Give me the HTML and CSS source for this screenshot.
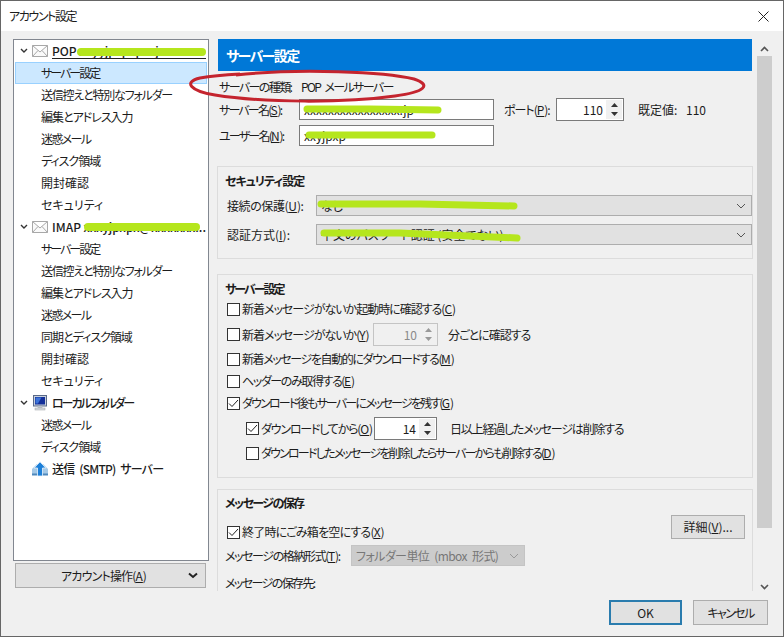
FILE: index.html
```html
<!DOCTYPE html>
<html lang="ja">
<head>
<meta charset="utf-8">
<title>アカウント設定</title>
<link rel="stylesheet" href="styles.css">
</head>
<body>
<div class="dialog">
  <div class="titlebar">
    <span class="t14">アカウント設定</span>
    <svg class="close" width="11" height="11" viewBox="0 0 11 11"><path d="M.5.500L10.500 10.500M10.500.500L.5 10.500" stroke="#222" fill="none"/></svg>
  </div>
  <div class="main">
    <div class="sidebar">
      <div class="tree">
        <div class="row account">
          <svg class="twisty" width="8" height="6" viewBox="0 0 8 6"><path d="M1 1l3 3 3-3" stroke="#333" stroke-width="1.4" fill="none"/></svg>
          <svg class="icon" width="16" height="12" viewBox="0 0 16 12"><path d="M.5.5h15v11H.5zM.5.5L8 7l7.5-6.5M.5 11.500L6 5.500M15.500 11.500L10 5.500" fill="#fafafa" stroke="#a8a8a8"/></svg>
          <span class="name underlined">POP xxyyjpxpxpxxjxxxxx</span>
        </div>
        <div class="row child selected"><span class="t20">サーバー設定</span></div>
        <div class="row child"><span class="t12">送信控えと特別なフォルダー</span></div>
        <div class="row child"><span class="t10">編集とアドレス入力</span></div>
        <div class="row child"><span class="t16">迷惑メール</span></div>
        <div class="row child"><span class="t10">ディスク領域</span></div>
        <div class="row child">開封確認</div>
        <div class="row child">セキュリティ</div>
        <div class="row account">
          <svg class="twisty" width="8" height="6" viewBox="0 0 8 6"><path d="M1 1l3 3 3-3" stroke="#333" stroke-width="1.4" fill="none"/></svg>
          <svg class="icon" width="16" height="12" viewBox="0 0 16 12"><path d="M.5.5h15v11H.5zM.5.5L8 7l7.5-6.5M.5 11.500L6 5.500M15.500 11.500L10 5.500" fill="#fafafa" stroke="#a8a8a8"/></svg>
          <span class="name">IMAP xxxyjpxpx@xxxxxxx...</span>
        </div>
        <div class="row child"><span class="t20">サーバー設定</span></div>
        <div class="row child"><span class="t12">送信控えと特別なフォルダー</span></div>
        <div class="row child"><span class="t10">編集とアドレス入力</span></div>
        <div class="row child"><span class="t16">迷惑メール</span></div>
        <div class="row child"><span class="t10">同期とディスク領域</span></div>
        <div class="row child">開封確認</div>
        <div class="row child">セキュリティ</div>
        <div class="row account">
          <svg class="twisty" width="8" height="6" viewBox="0 0 8 6"><path d="M1 1l3 3 3-3" stroke="#333" stroke-width="1.4" fill="none"/></svg>
          <svg class="icon" width="16" height="16" viewBox="0 0 16 16"><rect x="1.500" y=".5" width="13" height="10.500" fill="#c8d0dc" stroke="#5a6a88"/><rect x="3" y="2" width="10" height="7.500" fill="#14309a"/><path d="M3.500 2.500h6l-3.500 6h-2.500z" fill="#3d74d8"/><path d="M6 11h4l.5 2h-5z" fill="#b9c0c8"/><rect x="3" y="13" width="10" height="2" fill="#d6dade" stroke="#a0a4a8" stroke-width=".5"/></svg>
          <span class="name t20">ローカルフォルダー</span>
        </div>
        <div class="row child"><span class="t16">迷惑メール</span></div>
        <div class="row child"><span class="t10">ディスク領域</span></div>
        <div class="row account">
          <span class="twisty-space"></span>
          <svg class="icon" width="16" height="16" viewBox="0 0 16 16"><path d="M0 8l5-5h6l5 5v6H0z" fill="#a4c8e6"/><path d="M0 12.500h16v2H0z" fill="#4f88bc"/><path d="M8 .8l5.800 6.200H10.500v8h-5V7H2.200z" fill="#1d7fd8" stroke="#eaf4fc" stroke-width=".8"/></svg>
          <span class="name t8 spaced">送信 (SMTP) サーバー</span>
        </div>
      </div>
      <div class="action-btn">
        <span class="action-label t8">アカウント操作(<u>A</u>)</span>
        <svg class="action-arrow" width="10" height="7" viewBox="0 0 10 7"><path d="M1 1.500l4 3.500 4-3.500" stroke="#222" stroke-width="2" fill="none"/></svg>
      </div>
    </div>
    <div class="panel">
      <div class="panel-header"><span class="t16">サーバー設定</span></div>
      <div class="line type-line"><span class="type-label t16">サーバーの種類:</span><span class="t16 spaced">POP メールサーバー</span></div>
      <div class="line server-line">
        <span class="field-label t18">サーバー名(<u>S</u>):</span>
        <div class="textbox">xxxxxxxxxxxxxxxx.jp</div>
        <span class="port-label t10">ポート(<u>P</u>):</span>
        <div class="spin port-spin"><span class="spin-val">110</span>
          <div class="spin-btns"><svg width="7" height="4" viewBox="0 0 7 4"><path d="M3.500 0L7 4H0z" fill="#333"/></svg><svg width="7" height="4" viewBox="0 0 7 4"><path d="M3.500 4L7 0H0z" fill="#333"/></svg></div>
        </div>
        <span class="default-label">既定値:</span><span class="default-val">110</span>
      </div>
      <div class="line user-line">
        <span class="field-label t18">ユーザー名(<u>N</u>):</span>
        <div class="textbox">xxyjpxp</div>
      </div>

      <section class="group security">
        <h3 class="group-title t10">セキュリティ設定</h3>
        <div class="select-line">
          <span class="select-label t4">接続の保護(<u>U</u>):</span>
          <div class="select"><span>なし</span><svg width="10" height="6" viewBox="0 0 10 6"><path d="M1 1l4 4 4-4" stroke="#555" fill="none"/></svg></div>
        </div>
        <div class="select-line second">
          <span class="select-label">認証方式(<u>I</u>):</span>
          <div class="select"><span>平文のパスワード認証 (安全でない)</span><svg width="10" height="6" viewBox="0 0 10 6"><path d="M1 1l4 4 4-4" stroke="#555" fill="none"/></svg></div>
        </div>
      </section>

      <section class="group server">
        <h3 class="group-title t20">サーバー設定</h3>
        <div class="check-line first"><span class="check"></span><span class="t10">新着メッセージがないか起動時に確認する(<u>C</u>)</span></div>
        <div class="check-line spin-line">
          <span class="check"></span><span class="check-text-fixed1 t10">新着メッセージがないか(<u>Y</u>)</span>
          <div class="spin mins-spin disabled"><span class="spin-val">10</span>
            <div class="spin-btns"><svg width="7" height="4" viewBox="0 0 7 4"><path d="M3.500 0L7 4H0z" fill="#999"/></svg><svg width="7" height="4" viewBox="0 0 7 4"><path d="M3.500 4L7 0H0z" fill="#999"/></svg></div>
          </div>
          <span class="after-spin t10">分ごとに確認する</span>
        </div>
        <div class="check-line"><span class="check"></span><span class="t14">新着メッセージを自動的にダウンロードする(<u>M</u>)</span></div>
        <div class="check-line"><span class="check"></span><span class="t14">ヘッダーのみ取得する(<u>E</u>)</span></div>
        <div class="check-line"><span class="check checked"><svg width="11" height="9" viewBox="0 0 11 9"><path d="M1 4.500l3 3 6-6.500" stroke="#222" fill="none"/></svg></span><span class="t18">ダウンロード後もサーバーにメッセージを残す(<u>G</u>)</span></div>
        <div class="check-line spin-line nested">
          <span class="check checked"><svg width="11" height="9" viewBox="0 0 11 9"><path d="M1 4.500l3 3 6-6.500" stroke="#222" fill="none"/></svg></span><span class="check-text-fixed2 t12">ダウンロードしてから(<u>O</u>)</span>
          <div class="spin days-spin"><span class="spin-val">14</span>
            <div class="spin-btns"><svg width="7" height="4" viewBox="0 0 7 4"><path d="M3.500 0L7 4H0z" fill="#333"/></svg><svg width="7" height="4" viewBox="0 0 7 4"><path d="M3.500 4L7 0H0z" fill="#333"/></svg></div>
          </div>
          <span class="after-spin t12">日以上経過したメッセージは削除する</span>
        </div>
        <div class="check-line nested"><span class="check"></span><span class="t18">ダウンロードしたメッセージを削除したらサーバーからも削除する(<u>D</u>)</span></div>
      </section>

      <section class="group storage">
        <h3 class="group-title t16">メッセージの保存</h3>
        <div class="storage-body">
          <div class="storage-left">
            <div class="check-line trash"><span class="check checked"><svg width="11" height="9" viewBox="0 0 11 9"><path d="M1 4.500l3 3 6-6.500" stroke="#222" fill="none"/></svg></span><span class="t8">終了時にごみ箱を空にする(<u>X</u>)</span></div>
            <div class="format-line">
              <span class="format-label t14">メッセージの格納形式(<u>T</u>):</span>
              <div class="select disabled-select"><span class="t6 spaced">フォルダー単位 (mbox 形式)</span><svg width="10" height="6" viewBox="0 0 10 6"><path d="M1 1l4 4 4-4" stroke="#999" fill="none"/></svg></div>
            </div>
            <div class="saved-line t16">メッセージの保存先:</div>
          </div>
          <div class="btn detail-btn">詳細(<u>V</u>)...</div>
        </div>
      </section>
    </div>
    <div class="scrollbar">
      <svg class="scroll-arrow up" width="9" height="6" viewBox="0 0 9 6"><path d="M1 5l3.500-3.500L8 5" stroke="#555" stroke-width="1.600" fill="none"/></svg>
      <div class="thumb"></div>
      <svg class="scroll-arrow" width="9" height="6" viewBox="0 0 9 6"><path d="M1 1l3.500 3.500L8 1" stroke="#555" stroke-width="1.600" fill="none"/></svg>
    </div>
  </div>
  <div class="footer">
    <div class="btn ok-btn">OK</div>
    <div class="btn cancel-btn"><span class="t16">キャンセル</span></div>
  </div>
  <svg class="markup" width="784" height="637" viewBox="0 0 784 637">
    <g class="scribble">
      <path d="M81 52H202" stroke-width="8"/>
      <path d="M88 227H196" stroke-width="8"/>
      <path d="M307 109H370L438 110" stroke-width="7"/>
      <path d="M309 135H432" stroke-width="7"/>
      <path d="M321 204H420L514 206" stroke-width="7"/>
      <path d="M324 233H400L517 238" stroke-width="7"/>
    </g>
    <path class="ellipse" d="M236 75C300 68 385 72 414 79C432 85 425 92 395 96C345 103 265 103 215 95C190 91 183 82 200 78C212 76 224 75 240 74" />
  </svg>
</div>
</body>
</html>
```
FILE: styles.css
```css
* { box-sizing: border-box; }
html, body { margin: 0; padding: 0; }
body {
  width: 784px;
  height: 637px;
  overflow: hidden;
  font-family: "Noto Sans CJK JP", "Noto Sans", sans-serif;
  font-size: 12px;
  font-feature-settings: "palt";
  color: #1c1c1c;
  line-height: 16px;
  white-space: nowrap;
}

/* Letter-spacing steps: the reference font has condensed kana */
.t4 { letter-spacing: -0.4px; }
.t6 { letter-spacing: -0.6px; }
.t8 { letter-spacing: -0.8px; }
.t10 { letter-spacing: -1px; }
.t12 { letter-spacing: -1.2px; }
.t14 { letter-spacing: -1.4px; }
.t16 { letter-spacing: -1.6px; }
.t18 { letter-spacing: -1.8px; }
.t20 { letter-spacing: -2px; }
.spaced { word-spacing: 3px; }
u { letter-spacing: 0; }

.dialog {
  position: relative;
  width: 784px;
  height: 637px;
  border: 1px solid #666;
  background: #f0f0f0;
  display: flex;
  flex-direction: column;
}
.titlebar {
  height: 30px;
  background: #fff;
  display: flex;
  align-items: center;
  justify-content: space-between;
  padding: 0 14px 0 8px;
}
.main {
  height: 552px;
  margin-top: 8px;
  padding-left: 12px;
  display: flex;
}

/* sidebar */
.sidebar { width: 196px; }
.tree {
  height: 522px;
  background: #fff;
  border: 1px solid #828790;
}
.row {
  height: 22px;
  display: flex;
  align-items: center;
}
.child { padding-left: 27px; }
.selected {
  margin: 0 1px;
  padding-left: 25px;
  background: #cce8ff;
  border: 1px solid #99d1ff;
}
.account { padding-left: 6px; font-weight: 500; }
.twisty { width: 8px; margin-right: 4px; flex: none; }
.twisty-space { width: 12px; flex: none; }
.icon { margin-right: 4px; flex: none; width: 16px; }
.name { white-space: nowrap; overflow: hidden; flex: 1; }
.underlined { border-bottom: 1px solid #222; line-height: 15px; margin-right: 2px; }
.action-btn {
  height: 25px;
  width: 191px;
  margin: 2px 0 0 2px;
  background: #e1e1e1;
  border: 1px solid #adadad;
  display: flex;
  align-items: center;
  justify-content: center;
  position: relative;
}
.action-label { margin-right: 14px; }
.action-arrow { position: absolute; right: 7px; top: 8px; }

/* panel */
.panel {
  width: 536px;
  margin-left: 8px;
  height: 552px;
  overflow: hidden;
}
.panel-header {
  height: 32px;
  margin: 0 1px;
  background: #0078d7;
  color: #fff;
  font-size: 14px;
  font-weight: 700;
  display: flex;
  align-items: center;
  padding-left: 8px;
}
.line { display: flex; align-items: center; padding-left: 2px; }
.type-line { height: 20px; margin-top: 6px; }
.type-label { width: 82px; flex: none; }
.server-line { height: 21px; margin-top: 2px; }
.user-line { height: 21px; margin-top: 5px; }
.field-label { width: 80px; flex: none; }
.textbox {
  width: 195px;
  height: 21px;
  background: #fff;
  border: 1px solid #7a7a7a;
  padding-left: 4px;
  line-height: 19px;
  overflow: hidden;
}
.port-label { margin-left: 10px; width: 52px; flex: none; }
.spin {
  height: 23px;
  background: #fff;
  border: 1px solid #7a7a7a;
  display: flex;
  align-items: center;
  justify-content: flex-end;
  flex: none;
}
.spin-val { padding-right: 3px; }
.spin-btns {
  width: 16px;
  height: 19px;
  margin-right: 1px;
  background: #f0f0f0;
  display: flex;
  flex-direction: column;
  align-items: center;
  justify-content: space-around;
}
.port-spin { width: 68px; }
.default-label { margin-left: 14px; width: 48px; }
.group {
  border: 1px solid #dcdcdc;
}
.group-title {
  margin: 0;
  padding-left: 7px;
  font-size: 12px;
  font-weight: 700;
  line-height: 16px;
}
.security { height: 93px; margin-top: 20px; padding-top: 6px; }
.select-line { display: flex; align-items: center; margin-top: 6px; padding-left: 9px; }
.select-line.second { margin-top: 8px; }
.select-label { width: 89px; flex: none; }
.select {
  flex: 1;
  height: 21px;
  background: #e1e1e1;
  border: 1px solid #adadad;
  padding: 0 5px 0 4px;
  display: flex;
  align-items: center;
  justify-content: space-between;
}
.server { height: 204px; margin-top: 15px; padding-top: 6px; }
.check-line { display: flex; align-items: center; height: 22px; padding-left: 9px; }
.check-line.first { margin-top: 1px; }
.check {
  width: 13px;
  height: 13px;
  background: #fff;
  border: 1px solid #333;
  margin-right: 2px;
  flex: none;
  display: flex;
  align-items: center;
  justify-content: center;
}
.spin-line { height: 23px; margin-top: 3px; margin-bottom: 2px; }
.spin-line + .check-line { margin-top: 0; }
.nested { padding-left: 28px; }
.check-text-fixed1 { width: 131px; flex: none; }
.check-text-fixed2 { width: 113px; flex: none; }
.mins-spin { width: 65px; }
.days-spin { width: 63px; }
.disabled { border-color: #c4c4c4; background: #f0f0f0; color: #8a8a8a; }
.after-spin { margin-left: 10px; }
.days-spin + .after-spin { margin-left: 13px; }
.storage { margin-top: 11px; height: 120px; padding-top: 5px; }
.storage-body { display: flex; justify-content: space-between; }
.storage-left { flex: 1; }
.trash { margin-top: 10px; }
.format-line { display: flex; align-items: center; margin-top: 2px; padding-left: 7px; }
.format-label { width: 126px; flex: none; }
.disabled-select { flex: none; width: 174px; background: #ccc; border-color: #c4c4c4; color: #777; }
.saved-line { margin-top: 9px; padding-left: 7px; }
.btn {
  background: #e1e1e1;
  border: 1px solid #adadad;
  display: flex;
  align-items: center;
  justify-content: center;
}
.detail-btn { width: 74px; height: 24px; margin: 4px 7px 0 0; flex: none; }

/* scrollbar */
.scrollbar {
  width: 15px;
  margin-left: 4px;
  height: 552px;
  display: flex;
  flex-direction: column;
  align-items: center;
}
.scroll-arrow { flex: none; margin: 6px 0 6px; }
.scroll-arrow.up { margin: 7px 0 4px; }
.thumb { width: 15px; height: 472px; background: #cdcdcd; margin-bottom: 50px; flex: none; }

/* footer */
.footer {
  display: flex;
  justify-content: flex-end;
  gap: 11px;
  padding: 9px 15px 0 0;
}
.ok-btn { width: 73px; height: 25px; border: 2px solid #2a7cae; }
.cancel-btn { width: 75px; height: 25px; }

/* red and green hand-drawn markup laid over the screenshot */
.markup { position: absolute; left: -1px; top: -1px; pointer-events: none; }
.scribble path { fill: none; stroke: #b5e61d; stroke-linecap: round; }
.ellipse { fill: none; stroke: #c4242e; stroke-width: 3; }
```
